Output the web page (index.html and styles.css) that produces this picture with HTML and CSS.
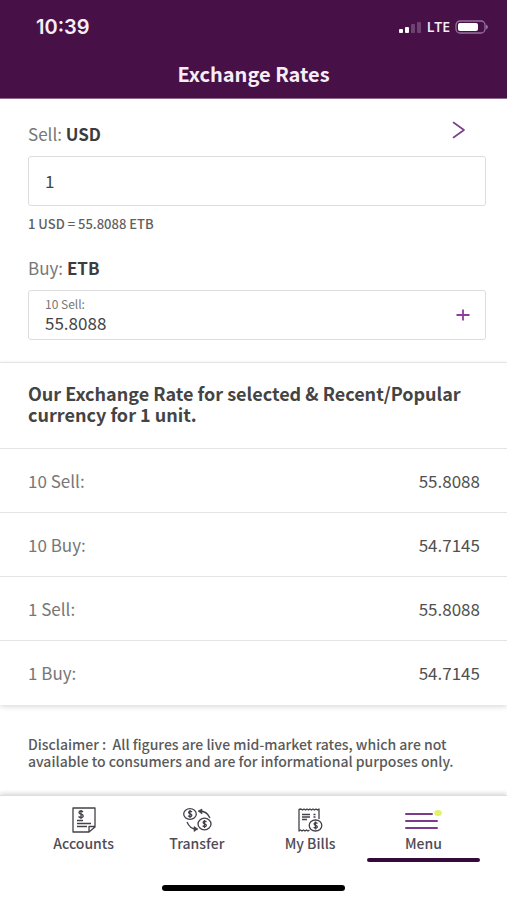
FILE: index.html
```html
<!DOCTYPE html>
<html lang="en">
<head>
<meta charset="utf-8">
<meta name="viewport" content="width=device-width, initial-scale=1">
<title>Exchange Rates</title>
<link rel="stylesheet" href="styles.css">
</head>
<body>
<div class="app">
  <header class="header">
    <div class="status">
      <span class="time">10:39</span>
      <div class="signals">
        <svg width="25" height="14" viewBox="0 0 25 14" aria-hidden="true">
          <rect x="1" y="9" width="4" height="4" rx="1" fill="#fff"/>
          <rect x="7" y="7" width="4" height="6" rx="1" fill="#fff"/>
          <rect x="13" y="4" width="4" height="9" rx="1" fill="#6f4371"/>
          <rect x="19" y="2" width="4" height="11" rx="1" fill="#6f4371"/>
        </svg>
        <span class="network">LTE</span>
        <svg width="34" height="14" viewBox="0 0 34 14" aria-hidden="true">
          <rect x="2" y="1" width="29" height="12" rx="4" fill="none" stroke="#96709a" stroke-width="1.3"/>
          <rect x="4" y="3" width="20" height="8" rx="2" fill="#fff"/>
          <path d="M32 4.500q4 2.500 0 5z" fill="#96709a"/>
        </svg>
      </div>
    </div>
    <h1 class="title">Exchange Rates</h1>
  </header>

  <main class="main">
    <form class="form">
      <div class="field-head">
        <label for="sell">Sell: <b>USD</b></label>
        <button class="icon-button" type="button" aria-label="Choose currency">
          <svg width="14" height="18" viewBox="0 0 14 18" fill="none" stroke="#7c3f8c" stroke-width="1.6" stroke-linecap="round" stroke-linejoin="round"><path d="M1.5 1.5 12 9 1.5 16.5"/></svg>
        </button>
      </div>
      <div class="box">
        <input class="value" id="sell" type="text" value="1">
      </div>
      <p class="note">1 USD = 55.8088 ETB</p>
      <div class="field-head">
        <span>Buy: <b>ETB</b></span>
      </div>
      <div class="box">
        <div class="stack">
          <label class="hint" for="buy">10 Sell:</label>
          <input class="value" id="buy" type="text" value="55.8088">
        </div>
        <button class="icon-button" type="button" aria-label="Add currency">
          <svg width="14" height="12" viewBox="0 0 14 12" fill="none" stroke="#8e3c9e" stroke-width="1.8"><path d="M.5 6h13M7 .5v11"/></svg>
        </button>
      </div>
    </form>

    <section class="rates">
      <h2 class="rates-title">Our Exchange Rate for selected &amp; Recent/Popular currency for 1 unit.</h2>
      <table class="table">
        <tbody>
          <tr><th scope="row">10 Sell:</th><td>55.8088</td></tr>
          <tr><th scope="row">10 Buy:</th><td>54.7145</td></tr>
          <tr><th scope="row">1 Sell:</th><td>55.8088</td></tr>
          <tr><th scope="row">1 Buy:</th><td>54.7145</td></tr>
        </tbody>
      </table>
    </section>

    <p class="disclaimer">Disclaimer :&nbsp; All figures are live mid-market rates, which are not available to consumers and are for informational purposes only.</p>
  </main>

  <footer class="footer">
    <nav class="nav">
      <a class="tab" href="#accounts">
        <svg width="26" height="28" viewBox="0 0 26 28" fill="none" stroke="#45404a" stroke-width="1.3" stroke-linejoin="round">
          <path d="M2 2h22v19l-6 5H2zM24 20.500h-6V26"/>
          <path d="M6 14.500h6M6 17.500h14M6 20.500h10"/>
          <path d="M12 6q-1-1-2.200-1Q8 5 8 6.600q0 1.200 2 1.600 2.200.4 2.200 1.800 0 1.500-2.200 1.500-1.600 0-2.500-1M10 4v9"/>
        </svg>
        <span>Accounts</span>
      </a>
      <a class="tab" href="#transfer">
        <svg width="30" height="28" viewBox="0 0 30 28" fill="none" stroke="#45404a" stroke-width="1.3">
          <ellipse cx="8" cy="8" rx="6.300" ry="5.300"/>
          <ellipse cx="22.500" cy="18" rx="6.500" ry="5.800"/>
          <path d="M10 6Q8.700 4.900 7.300 5.300 6 6 7.300 7.500l1.800.8q1.400 1.200 0 2.200-1.600.6-3-.7M8 4v8"/>
          <path d="M24.500 16q-1.300-1.100-2.700-.7-1.300.7 0 2.200l1.800.8q1.400 1.200 0 2.200-1.600.6-3-.7M22.500 14v8"/>
          <path d="M17.500 5Q25 5 28 12M5 16q3 7 9 7"/>
          <path d="M20 3l-4 2 4 3zM12 20.500l4 2.500-4 2.500z" fill="#45404a" stroke-width=".6"/>
        </svg>
        <span>Transfer</span>
      </a>
      <a class="tab" href="#bills">
        <svg width="26" height="28" viewBox="0 0 26 28" fill="none" stroke="#45404a" stroke-width="1.3" stroke-linejoin="round">
          <path d="M22 13V3l-1.500 1L19 3l-1.500 1L16 3l-1.500 1L13 3l-1.500 1L10 3 8.500 4 7 3 5.500 4 4 3 2 3.500V25l1.500-1L5 25l1.500-1L8 25l1.500-1 1.500 1 1.500-1"/>
          <path d="M5 8.500h8M5 11h8M5 13.500h5M16.500 8.500h2M16.500 11h2"/>
          <ellipse cx="18.500" cy="19.500" rx="6.300" ry="5.500"/>
          <path d="M20.500 17.500q-1.300-1.100-2.700-.7-1.300.7 0 2.200l1.800.8q1.400 1.200 0 2.200-1.600.6-3-.7M18.500 15.500v8"/>
        </svg>
        <span>My Bills</span>
      </a>
      <a class="tab active" href="#menu" aria-current="page">
        <svg width="38" height="28" viewBox="0 0 38 28" fill="none" stroke="#7b3d8b" stroke-width="2" stroke-linecap="round">
          <path d="M2 8h26M2 15h31M2 22h31"/>
          <ellipse cx="34" cy="7" rx="3.800" ry="3" fill="#e2f26a" stroke="none"/>
        </svg>
        <span>Menu</span>
      </a>
    </nav>
    <div class="home-bar"></div>
  </footer>
</div>
</body>
</html>
```
FILE: styles.css
```css
* {
  box-sizing: border-box;
}

body {
  margin: 0;
  background: #fff;
  color: #444;
  font-family: "Noto Sans CJK SC", "Noto Sans", sans-serif;
  font-size: 16px;
  line-height: 20px;
}

.app {
  display: flex;
  flex-direction: column;
  min-height: 100vh;
}

.header {
  background: #471148;
  border-bottom: 1px solid #8d6890;
  color: #f6eef7;
  padding: 16px 19px 12px 36px;
}

.status {
  display: flex;
  align-items: center;
  justify-content: space-between;
  height: 22px;
}

.time {
  font-family: Inter, sans-serif;
  font-size: 20px;
  font-weight: 600;
}

.signals {
  display: flex;
  align-items: center;
  gap: 4px;
}

.network {
  font-family: "Open Sans", sans-serif;
  font-size: 14px;
  font-weight: 600;
}

.title {
  margin: 24px 0 0;
  padding-right: 17px;
  font-size: 20px;
  font-weight: 700;
  line-height: 24px;
  text-align: center;
}

.main {
  flex: 1;
}

.form {
  padding: 23px 21px 22px 28px;
}

.field-head {
  display: flex;
  align-items: center;
  justify-content: space-between;
  height: 24px;
  margin-bottom: 10px;
  padding-right: 20px;
  color: #777;
  font-size: 17px;
}

.field-head b {
  color: #3c3c3c;
  font-weight: 700;
}

.icon-button {
  display: flex;
  padding: 0;
  border: 0;
  background: none;
}

.field-head .icon-button {
  margin-bottom: 8px;
}

.box {
  display: flex;
  align-items: center;
  justify-content: space-between;
  height: 50px;
  padding: 0 15px 0 16px;
  border: 1px solid #ddd;
  border-radius: 3px;
}

.stack {
  display: flex;
  flex: 1;
  flex-direction: column;
}

.hint {
  color: #777;
  font-size: 12px;
  line-height: 16px;
}

.value {
  flex: 1;
  width: 100%;
  min-width: 0;
  padding: 0;
  border: 0;
  outline: 0;
  background: none;
  color: #444;
  font: inherit;
  font-size: 17px;
  line-height: 22px;
}

.note {
  margin: 9px 0 23px;
  color: #606060;
  font-size: 13px;
  font-weight: 500;
  line-height: 18px;
}

.rates {
  border-top: 1px solid #e4e4e4;
  box-shadow: 0 2px 5px #ddd;
}

.rates-title {
  margin: 0;
  padding: 20px 28px 23px;
  color: #444;
  font-size: 18px;
  font-weight: 700;
  line-height: 21px;
}

.table {
  width: 100%;
  border-collapse: collapse;
}

.table th,
.table td {
  height: 64px;
  padding: 0 27px 0 28px;
  border-top: 1px solid #e4e4e4;
  font-size: 17px;
}

.table th {
  color: #777;
  font-weight: 400;
  text-align: left;
}

.table td {
  color: #505050;
  text-align: right;
}

.disclaimer {
  margin: 0;
  padding: 31px 28px 24px;
  color: #5a5a5a;
  font-size: 14px;
  font-weight: 500;
  line-height: 17px;
}

.footer {
  border-top: 1px solid #ddd;
  background: #fff;
  box-shadow: 0 -2px 4px #ddd;
}

.nav {
  display: grid;
  grid-template-columns: repeat(4, 1fr);
  padding: 10px 27px 0;
}

.tab {
  display: flex;
  flex-direction: column;
  align-items: center;
  color: #514b56;
  font-size: 14px;
  font-weight: 500;
  line-height: 18px;
  text-decoration: none;
}

.active::after {
  content: "";
  align-self: stretch;
  height: 4px;
  margin-top: 6px;
  border-radius: 2px;
  background: #35093a;
}

.home-bar {
  width: 36%;
  height: 6px;
  margin: 23px auto 9px;
  border-radius: 3px;
  background: #000;
}
```
